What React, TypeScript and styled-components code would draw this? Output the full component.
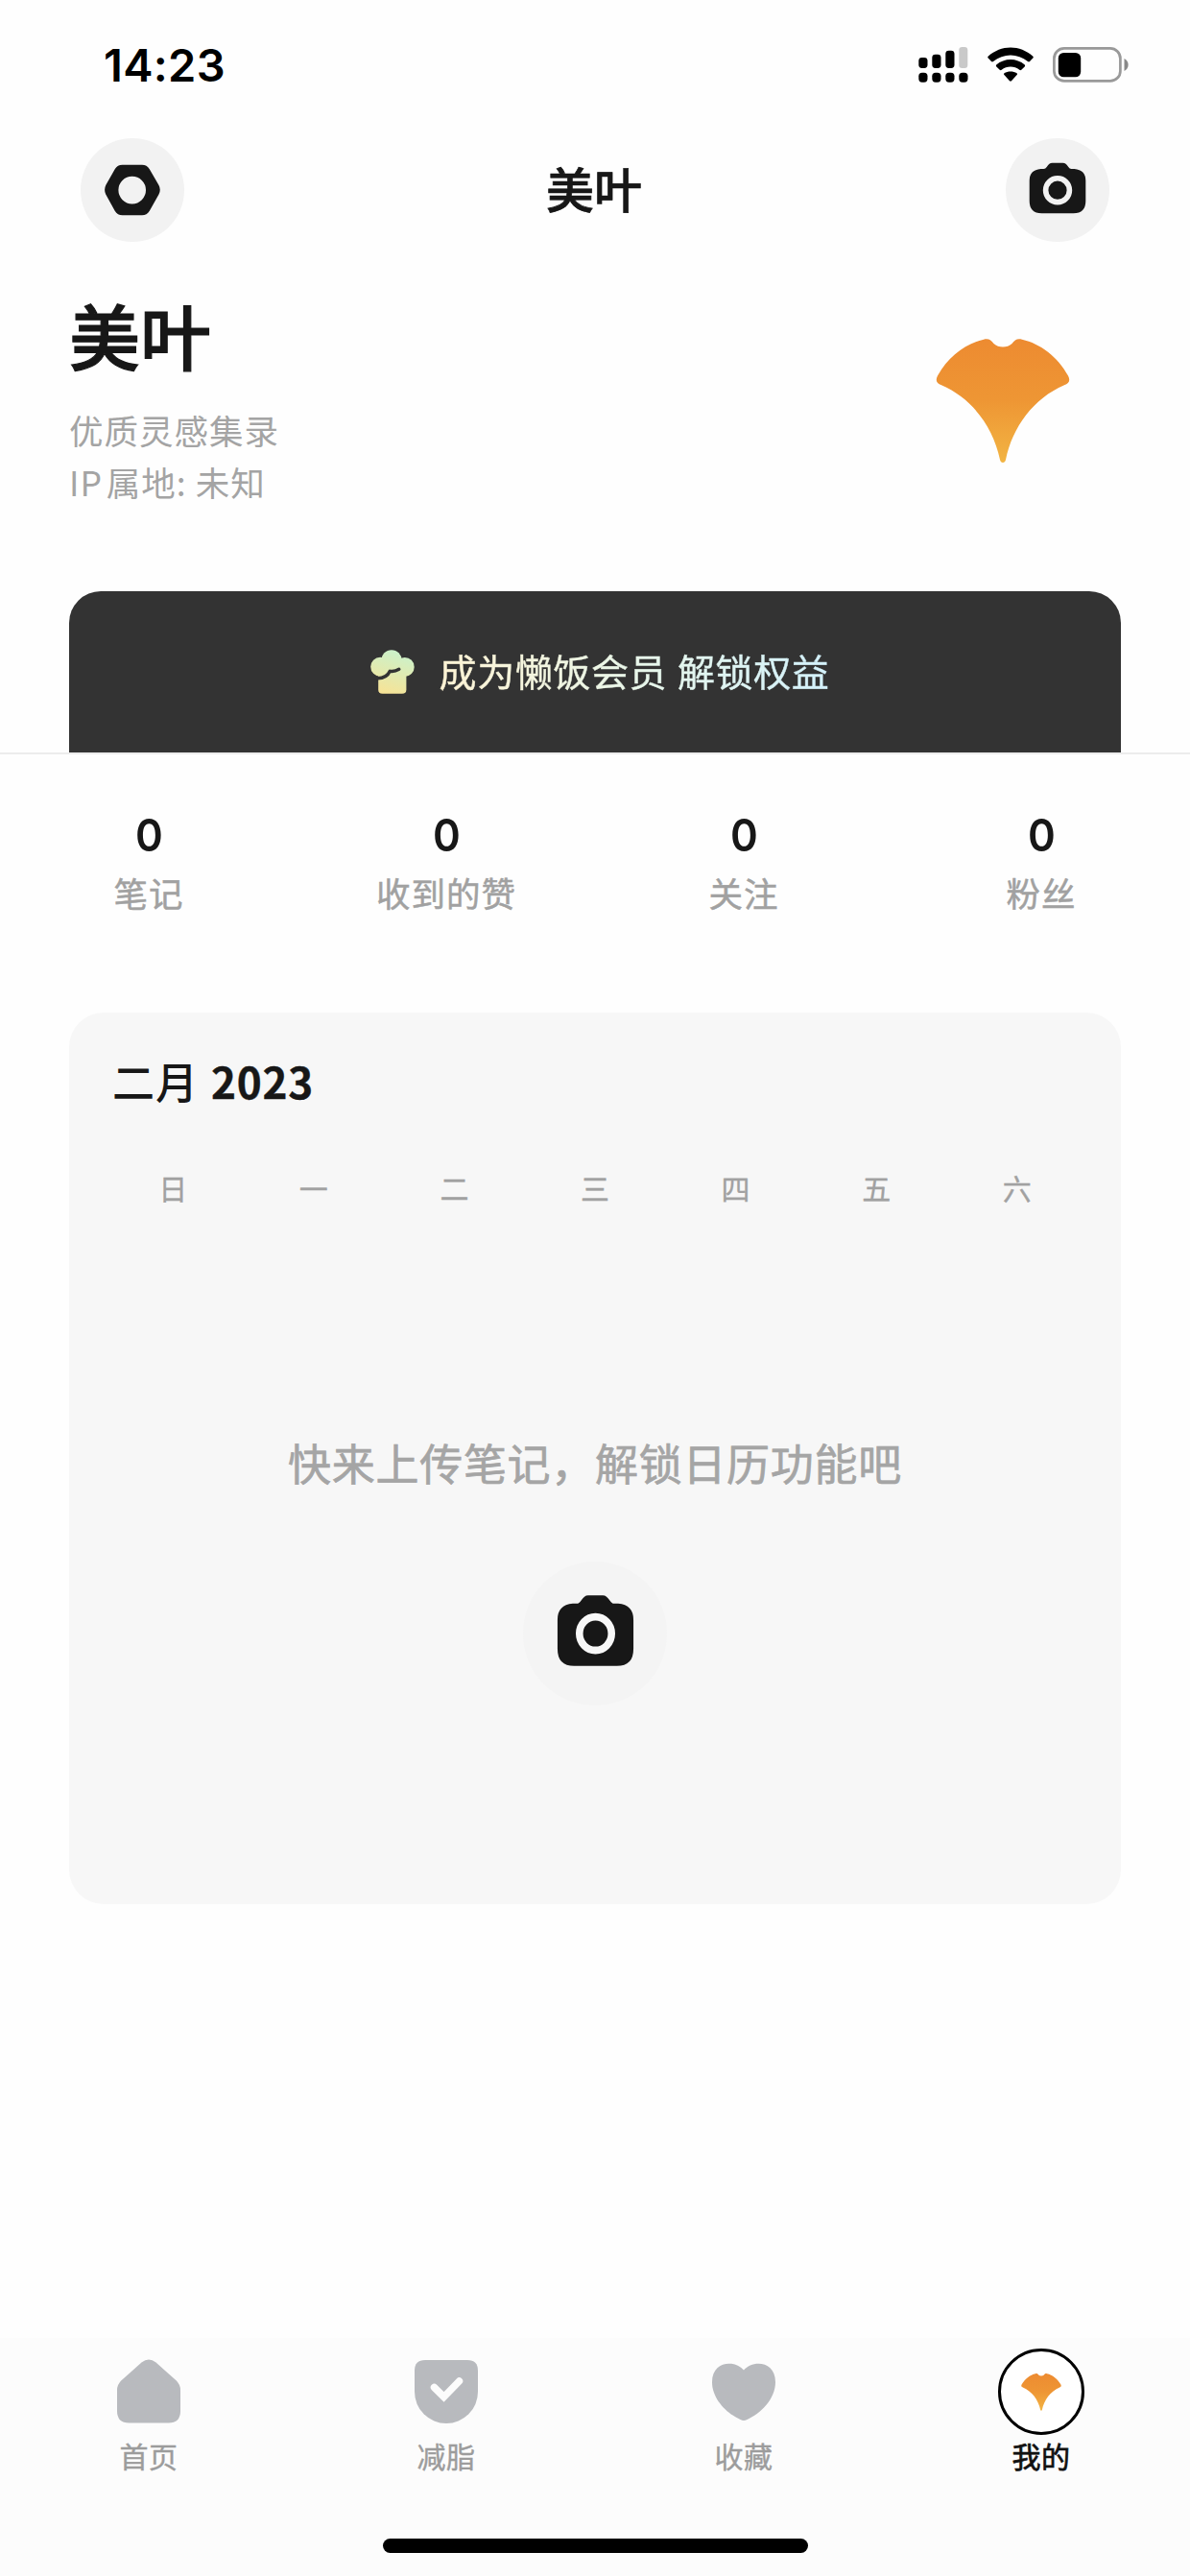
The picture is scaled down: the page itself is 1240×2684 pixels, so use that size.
import React from "react";
import styled, { createGlobalStyle } from "styled-components";

const Global = createGlobalStyle`
  * { box-sizing: border-box; }
  body { margin: 0; background: #fefefe; }
`;

const cjk = `"Noto Sans CJK SC", "Noto Sans", sans-serif`;

const Page = styled.div`
  width: 1240px;
  height: 2684px;
  display: flex;
  flex-direction: column;
  background: #fefefe;
  color: #171717;
  font-family: ${cjk};
  overflow: hidden;
`;

const StatusBar = styled.header`
  height: 135px;
  padding: 0 63px 0 108px;
  display: flex;
  align-items: center;
  justify-content: space-between;
`;

const Clock = styled.span`
  font: 560 47px/60px Inter, sans-serif;
  letter-spacing: 0.3px;
  color: #000;
`;

const StatusIcons = styled.div`
  display: flex;
  align-items: center;
  gap: 20px;
`;

const NavBar = styled.nav`
  height: 125px;
  padding: 0 84px;
  display: flex;
  align-items: center;
  justify-content: space-between;
`;

const RoundButton = styled.button<{ $size: number; $tone: string; $lift?: number }>`
  width: ${(p) => p.$size}px;
  height: ${(p) => p.$size}px;
  padding: 0 0 ${(p) => p.$lift ?? 0}px;
  border: 0;
  border-radius: 50%;
  background: ${(p) => p.$tone};
  display: flex;
  align-items: center;
  justify-content: center;
`;

const NavTitle = styled.h1`
  margin: 0;
  padding: 0 2px 6px 0;
  font-size: 50px;
  line-height: 60px;
  font-weight: 500;
  -webkit-text-stroke: 0.7px currentColor;
`;

const Profile = styled.section`
  height: 356px;
  padding: 43px 125px 0 72px;
  display: flex;
  justify-content: space-between;
`;

const Name = styled.h2`
  margin: 0 0 28px;
  font-size: 74px;
  line-height: 90px;
  font-weight: 500;
  -webkit-text-stroke: 1.2px currentColor;
`;

const Meta = styled.p`
  margin: 0;
  font-size: 35.5px;
  line-height: 54px;
  letter-spacing: 1px;
  font-weight: 400;
  color: #a4a4a4;
`;

const Latin = styled.span`
  margin-right: -5px;
`;

const Avatar = styled.div`
  padding-top: 50px;
`;

const Banner = styled.div`
  height: 168px;
  margin: 0 72px;
  padding-left: 10px;
  border-radius: 33px 33px 0 0;
  background: #333;
  display: flex;
  align-items: center;
  justify-content: center;
  gap: 26px;
`;

const BannerText = styled.span`
  font-size: 39px;
  line-height: 60px;
  letter-spacing: 0.6px;
  word-spacing: 1.5px;
  padding-bottom: 4px;
  background: linear-gradient(90deg, #fdf3d4, #e9f7ea 50%, #d3f1fb);
  background-clip: text;
  -webkit-background-clip: text;
  color: transparent;
  -webkit-text-stroke: 0.5px transparent;
`;

const Divider = styled.div`
  height: 2px;
  background: #ececec;
`;

const Stats = styled.section`
  height: 269px;
  padding-top: 54px;
  display: grid;
  grid-template-columns: repeat(4, 1fr);
`;

const Stat = styled.div`
  display: flex;
  flex-direction: column;
  align-items: center;
  gap: 3px;
`;

const StatValue = styled.span`
  padding-left: 1px;
  font-family: Inter, sans-serif;
  font-size: 47px;
  line-height: 60px;
  font-weight: 600;
  transform: scaleX(0.93);
`;

const StatLabel = styled.span`
  font-size: 35.5px;
  line-height: 54px;
  letter-spacing: 1px;
  color: #a1a1a1;
  -webkit-text-stroke: 0.5px currentColor;
`;

const Calendar = styled.section`
  height: 929px;
  margin: 0 72px;
  padding: 41px 35px 0;
  border-radius: 36px;
  background: #f7f7f7;
  display: flex;
  flex-direction: column;
`;

const Month = styled.h3`
  margin: 0 10px 61px;
  font-size: 44px;
  line-height: 60px;
  font-weight: 500;
  letter-spacing: 1px;
`;

const Year = styled.span`
  margin-left: 2px;
  font-weight: 700;
  letter-spacing: 0.8px;
  -webkit-text-stroke: 0.4px currentColor;
`;

const Weekdays = styled.div`
  display: grid;
  grid-template-columns: repeat(7, 1fr);
  font-size: 30px;
  line-height: 40px;
  text-align: center;
  color: #a1a1a1;
  -webkit-text-stroke: 0.3px currentColor;
`;

const Empty = styled.div`
  margin-top: 237px;
  display: flex;
  flex-direction: column;
  align-items: center;
  gap: 73px;
`;

const EmptyText = styled.p`
  margin: 0;
  font-size: 45px;
  line-height: 60px;
  letter-spacing: 0.7px;
  color: #a5a5a5;
  -webkit-text-stroke: 0.7px currentColor;
`;

const TabBar = styled.footer`
  height: 248px;
  margin-top: auto;
  padding-top: 11px;
  background: #fcfcfc;
  display: flex;
  flex-direction: column;
  align-items: center;
  gap: 67px;
`;

const Tabs = styled.div`
  width: 100%;
  display: grid;
  grid-template-columns: repeat(4, 1fr);
`;

const Tab = styled.div<{ $active?: boolean }>`
  display: flex;
  flex-direction: column;
  align-items: center;
  font-size: 30px;
  line-height: 40px;
  letter-spacing: 0.4px;
  color: ${(p) => (p.$active ? "#111" : "#9c9c9c")};
  -webkit-text-stroke: ${(p) => (p.$active ? 0.7 : 0.4)}px currentColor;
`;

const TabIcon = styled.div<{ $ring?: boolean }>`
  width: 90px;
  height: 90px;
  margin-bottom: 1px;
  border: ${(p) => (p.$ring ? "3px solid #000" : "0")};
  border-radius: 50%;
  background: ${(p) => (p.$ring ? "#fff" : "none")};
  display: flex;
  align-items: center;
  justify-content: center;
`;

const HomeIndicator = styled.div`
  width: 443px;
  height: 15px;
  border-radius: 8px;
  background: #000;
`;

const Signal = () => (
  <svg width="52" height="37" viewBox="0 0 52 37">
    <rect x="0.3" y="11" width="9.2" height="11" rx="3.4" />
    <rect x="14.3" y="7.7" width="9.2" height="14.3" rx="3.4" />
    <rect x="28.3" y="3.7" width="9.2" height="18.3" rx="3.4" />
    <rect x="42.3" y="0" width="9" height="22" rx="3.2" fill="#c9c9c9" />
    {[0.3, 14.3, 28.3, 42.3].map((x) => (
      <rect key={x} x={x} y="26.7" width="9.2" height="10" rx="3.6" />
    ))}
  </svg>
);

const Wifi = () => (
  <svg width="48" height="37" viewBox="0 0 48 37">
    <path d="M.6 9.8Q-.2 10.700.7 11.600L4 15Q5 15.900 6 15C16.500 6.200 31.500 6.200 42 15Q43 15.900 44 15L47.300 11.600Q48.200 10.700 47.400 9.800C34-2.600 14-2.600.6 9.800Z" />
    <path d="M9.200 18.600Q8.400 19.500 9.300 20.400L12.700 23.700Q13.700 24.600 14.700 23.700C20.100 19.300 27.900 19.300 33.300 23.700Q34.300 24.600 35.300 23.700L38.700 20.400Q39.600 19.500 38.800 18.600C30.400 11.200 17.600 11.200 9.200 18.600Z" />
    <path d="M17.400 27.200Q16.500 28.100 17.400 29.100L23 35.200Q24 36.100 25 35.200L30.600 29.100Q31.500 28.100 30.600 27.200C26.600 24.800 21.400 24.800 17.400 27.200Z" />
  </svg>
);

const Battery = () => (
  <svg width="80" height="37" viewBox="0 0 80 37">
    <rect x="1.4" y="1.4" width="69" height="34" rx="10.5" fill="none" stroke="#999" strokeWidth="2.7" />
    <rect x="5.8" y="6" width="23.4" height="25.3" rx="5.5" />
    <path d="M74.500 12C80 14.500 80 22.500 74.500 25Z" fill="#888" />
  </svg>
);

const Nut = () => (
  <svg width="58" height="54" viewBox="0 0 58 54">
    <path
      fill="#171717"
      fillRule="evenodd"
      d="M18.500 .8H39Q44 .8 46.800 5.200L56.500 22Q59 26.800 56.500 31.600L46.800 48.700Q44 53.200 39 53.200H18.500Q13.500 53.200 10.700 48.700L1.200 31.600Q-1 26.800 1.200 22L10.700 5.200Q13.500 .8 18.500 .8ZM28.700 12.800a14.300 14.300 0 1 0 0 28.600a14.300 14.300 0 1 0 0-28.600Z"
    />
  </svg>
);

const Camera = ({ width, height, hole }: { width: number; height: number; hole: string }) => (
  <svg width={width} height={height} viewBox="0 0 60 54" preserveAspectRatio="none">
    <path
      fill="#171717"
      d="M12.500 7H15.500C17 7 17.700 6.300 18.700 5C20.800 2.200 22 .8 24.500 .8H35.500C38 .8 39.200 2.200 41.300 5C42.300 6.300 43 7 44.500 7H47.500Q59.300 8 59.300 19V40.500Q59.300 53.200 46.500 53.200H13.500Q.7 53.200 .7 40.500V19Q.7 8 12.500 7Z"
    />
    <circle cx="30" cy="29.2" r="12.4" fill="none" stroke={hole} strokeWidth="5.6" />
  </svg>
);

const Leaf = ({ width, id }: { width: number; id: string }) => (
  <svg width={width} height={(width * 130) / 140} viewBox="0 0 140 130">
    <defs>
      <linearGradient id={id} x1="0" y1="0" x2="0" y2="1">
        <stop offset="0" stopColor="#ed8b31" />
        <stop offset="0.5" stopColor="#ee9634" />
        <stop offset="1" stopColor="#f2b443" />
      </linearGradient>
    </defs>
    <path
      fill={`url(#${id})`}
      d="M50 .7C55.500 -.5 57.500 1.500 60.500 5C65.500 9.800 74.500 9.800 79.500 5C82.500 1.500 84.500 -.5 90 .7C109 5 127 18.500 138 38.500C140.600 43.500 139 46.200 134 48.300C102 62 80 92 73 126C72.300 130 67.700 130 67 126C60 92 38 62 6 48.300C1 46.200-.6 43.500 2 38.500C13 18.500 31 5 50 .7Z"
    />
  </svg>
);

const ChefHat = () => (
  <svg width="46" height="46" viewBox="0 0 46 46">
    <defs>
      <linearGradient id="hat" gradientUnits="userSpaceOnUse" x1="30" y1="0" x2="16" y2="46">
        <stop offset="0" stopColor="#c9f2cd" />
        <stop offset="1" stopColor="#f7e396" />
      </linearGradient>
    </defs>
    <g fill="url(#hat)">
      <circle cx="10.2" cy="17.7" r="10" />
      <circle cx="22" cy="10.8" r="10.6" />
      <circle cx="35.7" cy="17.9" r="10" />
      <path d="M10 12H37.400V41.500Q37.400 45.800 33 45.800H12.500Q8.200 45.800 8.200 41.500V24Z" />
    </g>
    <path
      d="M6.500 29.700C13.500 30 18 27.500 20.300 22.300C23.500 22.900 27 22 29.800 20.300"
      fill="none"
      stroke="#333"
      strokeWidth="3.4"
      strokeLinecap="round"
      strokeLinejoin="round"
    />
  </svg>
);

const Home = () => (
  <svg width="66" height="68" viewBox="0 0 66 68">
    <path fill="#b8babe" d="M25.500 3.500Q33-2.500 40.500 3.500L61.500 22.300Q66 26.500 66 32.500V54Q66 66.500 53.500 66.500H12.500Q0 66.500 0 54V32.500Q0 26.500 4.500 22.300Z" />
  </svg>
);

const Shield = () => (
  <svg width="66" height="66" viewBox="0 0 66 66">
    <path fill="#b8babe" d="M11 0H55Q66 0 66 11V33A33 33 0 0 1 0 33V11Q0 0 11 0Z" />
    <path d="M20.500 28.500L30.500 38.500L46.500 22" fill="none" stroke="#fcfcfc" strokeWidth="7.5" strokeLinecap="round" />
  </svg>
);

const Heart = () => (
  <svg width="66" height="60" viewBox="0 0 66 60">
    <path fill="#b8babe" d="M33 7.500C42-3.500 66-2.500 66 20C66 38 50 53 36.500 59Q33 60.800 29.500 59C16 53 0 38 0 20C0-2.500 24-3.500 33 7.500Z" />
  </svg>
);

const stats = ["笔记", "收到的赞", "关注", "粉丝"];
const days = ["日", "一", "二", "三", "四", "五", "六"];
const tabs = [
  { label: "首页", icon: <Home /> },
  { label: "减脂", icon: <Shield /> },
  { label: "收藏", icon: <Heart /> },
  { label: "我的", icon: <Leaf width={42} id="leaf-small" />, active: true },
];

export default function App() {
  return (
    <Page>
      <Global />
      <StatusBar>
        <Clock>14:23</Clock>
        <StatusIcons>
          <Signal />
          <Wifi />
          <Battery />
        </StatusIcons>
      </StatusBar>
      <NavBar>
        <RoundButton $size={108} $tone="#f2f2f2" aria-label="设置">
          <Nut />
        </RoundButton>
        <NavTitle>美叶</NavTitle>
        <RoundButton $size={108} $tone="#f2f2f2" $lift={4} aria-label="拍照">
          <Camera width={60} height={54} hole="#f2f2f2" />
        </RoundButton>
      </NavBar>
      <Profile>
        <div>
          <Name>美叶</Name>
          <Meta>优质灵感集录</Meta>
          <Meta>
            <Latin>IP</Latin> 属地: 未知
          </Meta>
        </div>
        <Avatar>
          <Leaf width={140} id="leaf-large" />
        </Avatar>
      </Profile>
      <Banner>
        <ChefHat />
        <BannerText>成为懒饭会员 解锁权益</BannerText>
      </Banner>
      <Divider />
      <Stats>
        {stats.map((label) => (
          <Stat key={label}>
            <StatValue>0</StatValue>
            <StatLabel>{label}</StatLabel>
          </Stat>
        ))}
      </Stats>
      <Calendar>
        <Month>
          二月 <Year>2023</Year>
        </Month>
        <Weekdays>
          {days.map((d) => (
            <span key={d}>{d}</span>
          ))}
        </Weekdays>
        <Empty>
          <EmptyText>快来上传笔记，解锁日历功能吧</EmptyText>
          <RoundButton $size={150} $tone="#f4f4f4" $lift={7} aria-label="上传笔记">
            <Camera width={81} height={76} hole="#f7f7f7" />
          </RoundButton>
        </Empty>
      </Calendar>
      <TabBar>
        <Tabs>
          {tabs.map((t) => (
            <Tab key={t.label} $active={t.active}>
              <TabIcon $ring={t.active}>{t.icon}</TabIcon>
              {t.label}
            </Tab>
          ))}
        </Tabs>
        <HomeIndicator />
      </TabBar>
    </Page>
  );
}
